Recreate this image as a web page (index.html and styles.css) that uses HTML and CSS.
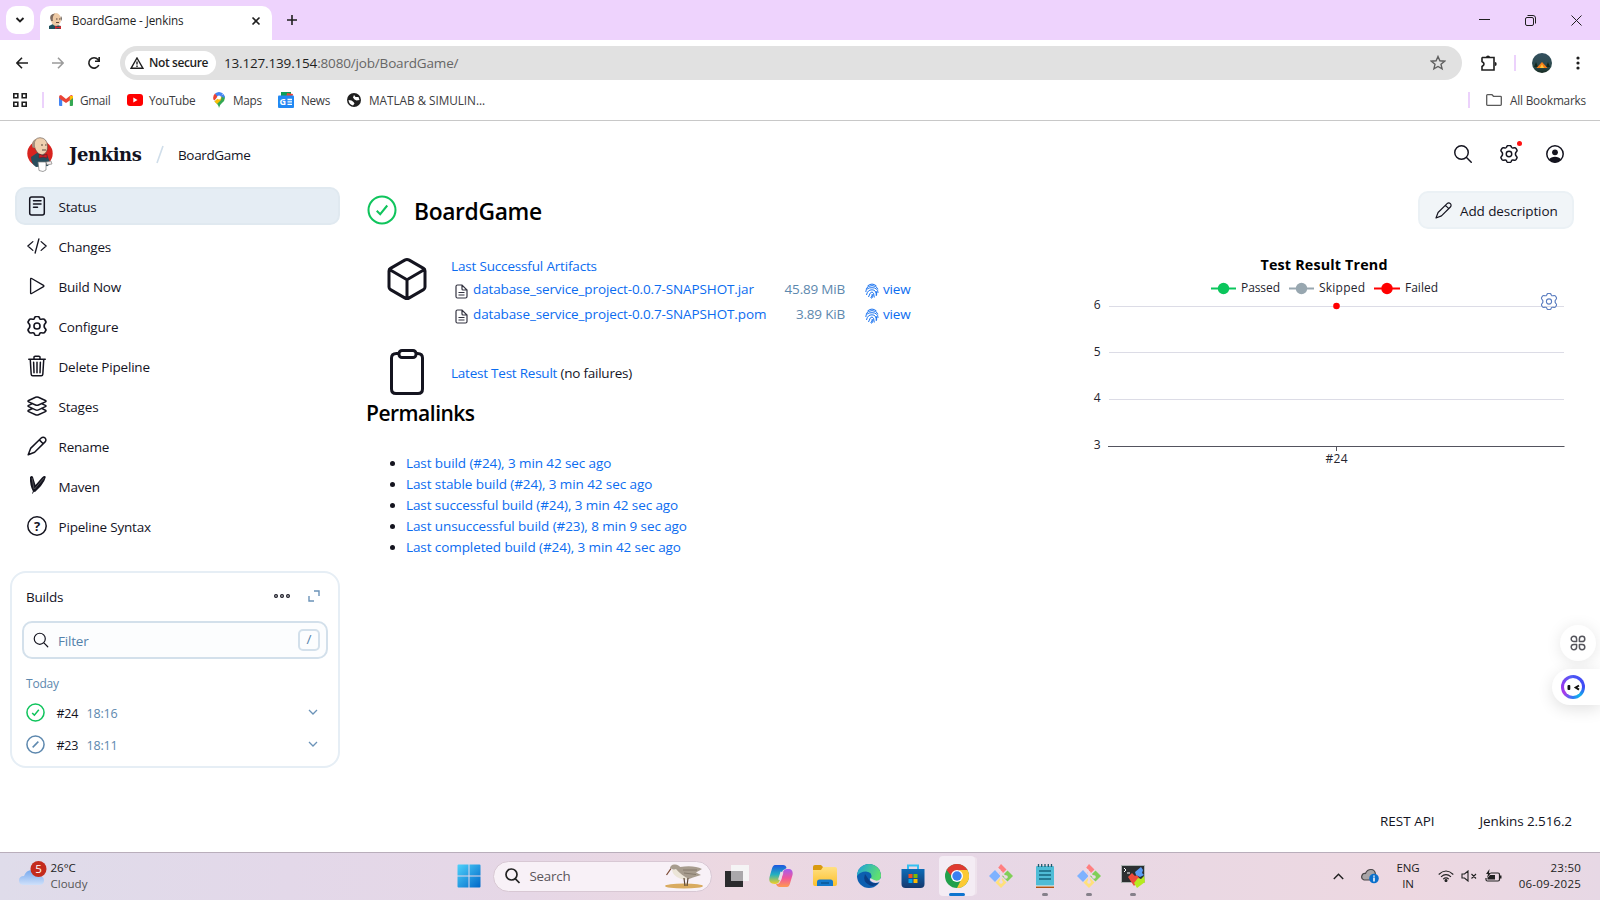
FILE: index.html
```html
<!DOCTYPE html>
<html lang="en">
<head>
<meta charset="utf-8">
<title>BoardGame - Jenkins</title>
<link rel="stylesheet" href="styles.css">
</head>
<body>
<svg class="defs" aria-hidden="true">
  <defs>
    <symbol id="search" viewBox="0 0 512 512"><path d="M221.09 64a157.09 157.09 0 10157.09 157.09A157.1 157.1 0 00221.09 64zM338.29 338.29L448 448"/></symbol>
    <symbol id="gear" viewBox="0.500 0.500 19 19"><path transform="translate(-1 0) scale(1.100 1)" d="M8 1.900Q8.400 1 9.300 1h1.400Q11.600 1 12 1.900L12.400 2.900Q12.800 3.700 13.700 3.600L15.200 3.400Q16.200 3.300 16.700 4.100L17.500 5.500Q18 6.400 17.400 7.200L16.700 8.100Q16.200 8.700 16.200 10T16.700 11.900L17.400 12.800Q18 13.600 17.500 14.500L16.700 15.900Q16.200 16.700 15.200 16.600L13.700 16.400Q12.800 16.300 12.400 17.100L12 18.100Q11.600 19 10.700 19H9.300Q8.400 19 8 18.100L7.600 17.100Q7.200 16.300 6.300 16.400L4.800 16.600Q3.800 16.700 3.300 15.900L2.500 14.500Q2 13.600 2.600 12.800L3.300 11.900Q3.800 11.300 3.800 10T3.300 8.100L2.600 7.200Q2 6.400 2.500 5.500L3.300 4.100Q3.800 3.300 4.800 3.400L6.300 3.600Q7.200 3.700 7.600 2.900Z"/><circle cx="10" cy="10" r="2.900"/></symbol>
    <symbol id="pencil" viewBox="0 0 20 20"><path d="M1.200 18.800L3.600 12.400 14.200 2a2.700 2.700 0 0 1 3.900 3.900L7.600 16.300ZM12.300 3.900l3.900 3.900"/></symbol>
    <symbol id="file" viewBox="0 0 13 15"><path d="M1 2.500Q1 1 2.500 1H7l5 5v6.500Q12 14 10.500 14h-8Q1 14 1 12.500ZM7 1v4Q7 6 8 6h4M3.500 8.500h6M3.500 11h6"/></symbol>
    <symbol id="finger" viewBox="0 0 14 16"><path d="M2.500 3Q7-.8 11.500 3M.8 6Q3 2.600 7 2.600T13.200 6M.8 9Q.8 4.700 7 4.700T13 10M1.500 12Q2.500 6.800 7 6.800T11.300 13M3.500 14Q5 8.900 7 8.900T9.300 14.500M5.700 15Q7.500 13 7.200 11M11 8Q12 10 11.600 12M8 11.500Q8 14 6.500 15.500"/></symbol>
    <symbol id="check" viewBox="0 0 20 20"><circle cx="10" cy="10" r="9"/><path d="M6.500 10.500l2.300 2.300L13.500 7"/></symbol>
    <symbol id="down" viewBox="0 0 10 6"><path d="M1 1l4 4 4-4"/></symbol>
    <symbol id="git" viewBox="0 0 24 24"><path fill="#ff7f80" d="M12 0l5.500 5.500-5.500 5.500-2-2 2-3-3-2z"/><path fill="#7eb2ff" d="M6 6l5.500 6L6 18 0 12z"/><path fill="#80cf58" d="M18.500 6.500L24 12l-5.500 5.500L13 12z"/><path fill="#ffe07a" d="M12 13l5.500 5.500L12 24l-5.500-5.500z"/><path fill="none" stroke="#ead9e5" stroke-width="1.800" d="M8 4l4 4v10M12 9l5 4"/><circle cx="12" cy="9" r="1.800" fill="#ead9e5"/><circle cx="12" cy="18" r="1.800" fill="#ead9e5"/><circle cx="17" cy="13" r="1.800" fill="#ead9e5"/></symbol>
    <linearGradient id="gwin" x2="1" y2="1"><stop stop-color="#4fd2fb"/><stop offset="1" stop-color="#0067c8"/></linearGradient>
    <linearGradient id="gedge" x2="1" y2=".4"><stop stop-color="#1b9fe0"/><stop offset="1" stop-color="#5fe070"/></linearGradient>
    <linearGradient id="gcopA" x2="0" y2="1"><stop stop-color="#1c57e0"/><stop offset=".5" stop-color="#23b0c0"/><stop offset="1" stop-color="#f5d020"/></linearGradient>
    <linearGradient id="gcopB" x2="0" y2="1"><stop stop-color="#a45cf0"/><stop offset=".5" stop-color="#f0569a"/><stop offset="1" stop-color="#ff9a50"/></linearGradient>
    <linearGradient id="gfold" x2="0" y2="1"><stop stop-color="#ffe083"/><stop offset="1" stop-color="#fcc02c"/></linearGradient>
    <linearGradient id="gstore" x2="0" y2="1"><stop stop-color="#0d6cb8"/><stop offset="1" stop-color="#15386e"/></linearGradient>
    <linearGradient id="gcloud" x2="0" y2="1"><stop stop-color="#76a9ee"/><stop offset="1" stop-color="#cfe0fa"/></linearGradient>
    <linearGradient id="gsky" x2="0" y2="1"><stop stop-color="#33505f"/><stop offset=".7" stop-color="#2c4a4c"/><stop offset="1" stop-color="#14281e"/></linearGradient>
  </defs>
</svg>

<header class="tabs">
  <div class="tab-search"><svg width="10" height="8" viewBox="0 0 10 8" class="ink s2"><path d="M1.500 2L5 5.500 8.500 2"/></svg></div>
  <div class="tab">
    <svg width="16" height="16" viewBox="0 0 16 16"><path d="M1 16v-3l4-2 8 2v3z" fill="#1d4f5c"/><ellipse cx="8" cy="6.500" rx="5" ry="6.500" fill="#edc9a4"/><path d="M3 8Q0 1 7 .5 4 3 5 8z" fill="#7d6a5e"/><path d="M13 3q1.500 2 .5 5l-1-2z" fill="#4b4039"/><path d="M8 6h1.500M11 6h1M8 9.500h3" stroke="#5b4438"/><path d="M7 13l3 1 3-1v3l-3-1-3 1z" fill="#d7282d"/></svg>
    <span class="tab-title">BoardGame - Jenkins</span>
    <svg width="10" height="10" viewBox="0 0 10 10" class="ink s16"><path d="M1.500 1.500l7 7M8.500 1.500l-7 7"/></svg>
  </div>
  <svg class="newtab ink s16" width="12" height="12" viewBox="0 0 12 12"><path d="M6 1v10M1 6h10"/></svg>
  <div class="window-buttons">
    <svg width="11" height="11" viewBox="0 0 11 11" class="ink s1"><path d="M0 4.500h11"/></svg>
    <svg width="11" height="11" viewBox="0 0 11 11" class="ink s1"><rect x=".5" y="2.500" width="8" height="8" rx="1.500"/><path d="M2.500 .5H8Q10.500 .5 10.500 3v5.500"/></svg>
    <svg width="11" height="11" viewBox="0 0 11 11" class="ink s1"><path d="M.5 .5l10 10M10.500 .5l-10 10"/></svg>
  </div>
</header>

<div class="toolbar">
  <svg width="12" height="12" viewBox="0 0 12 12" class="ink s16"><path d="M12 6H1M6 .8L.9 6 6 11.200"/></svg>
  <svg width="12" height="12" viewBox="0 0 12 12" class="ink s16 faded"><path d="M0 6h11M6 .8L11.100 6 6 11.200"/></svg>
  <svg width="14" height="14" viewBox="0 0 14 14" class="ink s16"><path d="M11.800 9A5.200 5.200 0 1 1 11 3.500L12 4.700M12.200 1v4.200H8"/></svg>
  <div class="omnibox">
    <div class="chip"><svg width="14" height="12" viewBox="0 0 14 12" class="ink s14"><path d="M7 1L13 11.300H1zM7 4.500v3M7 8.600v1.300"/></svg><span>Not secure</span></div>
    <span class="url">13.127.139.154<span class="path">:8080/job/BoardGame/</span></span>
    <svg class="star" width="16" height="16" viewBox="0 0 16 16"><path d="M8 1.500l1.900 4.300 4.700.4-3.600 3.100 1.100 4.600L8 11.500l-4.100 2.400L5 9.300 1.400 6.200l4.700-.4z"/></svg>
  </div>
  <svg width="17" height="17" viewBox="0 0 17 17" class="ink s16"><path d="M2.500 2.500h11.500v12.500H2v-3.500Q6 9 2 6.500V3z"/><path d="M6 2.200a2 1.800 0 0 1 4 0zM15 7a1.700 2 0 0 1 0 4z" fill="#1f1f1f" stroke="none"/></svg>
  <i class="vbar"></i>
  <svg class="avatar" width="20" height="20" viewBox="0 0 20 20"><circle cx="10" cy="10" r="10" fill="url(#gsky)"/><path d="M2 14l2-5 2 5M14 14l2-5 2 5" fill="#14281e"/><path d="M4.500 15L10 9l5.500 6z" fill="#f57c1a"/><path d="M8 15l2-4 2 4z" fill="#ffc637"/></svg>
  <svg width="4" height="14" viewBox="0 0 4 14" fill="#1f1f1f"><circle cx="2" cy="2" r="1.600"/><circle cx="2" cy="7" r="1.600"/><circle cx="2" cy="12" r="1.600"/></svg>
</div>

<nav class="bookmarks">
  <svg width="14" height="14" viewBox="0 0 14 14" class="ink s16"><path d="M.8.8h4v4h-4zM9.200.8h4v4h-4zM.8 9.200h4v4h-4zM9.200 9.200h4v4h-4z"/></svg>
  <i class="vbar"></i>
  <svg class="b-gmail" width="14" height="11" viewBox="0 0 14 11"><path fill="#4285f4" d="M0 2l3.200 2v7H1Q0 11 0 10z"/><path fill="#34a853" d="M14 2l-3.200 2v7H13q1 0 1-1z"/><path fill="#ea4335" d="M0 2Q0 0 2 0L7 4 12 0Q14 0 14 2L13 4 7 8 1 4z"/><path fill="#fbbc04" d="M10.800 1L14 1v2L10.800 5.500z"/></svg>
  <span class="b-t1">Gmail</span>
  <svg class="b-yt" width="16" height="12" viewBox="0 0 16 12"><rect width="16" height="12" rx="3" fill="#f00"/><path d="M6.300 3.500v5L10.500 6z" fill="#fff"/></svg>
  <span class="b-t2">YouTube</span>
  <svg class="b-map" width="12" height="16" viewBox="0 0 12 16"><path fill="#34a853" d="M6 16Q5.600 12.500 1.500 9.500L10 3l1.500 1Q13 8 9 11 6.400 13 6 16z"/><path fill="#fbbc04" d="M1.500 9.500L9 2.500 8 8l-4 4z"/><path fill="#ea4335" d="M.4 7.500Q-.5 4 2 1.500L5 4 1.500 8.500z"/><path fill="#4285f4" d="M2 1.500Q6-1.500 10 1.500L6 6 4 4z"/><path fill="#4285f4" d="M7 4l3.500-2q1.500 2 1 4z"/><circle cx="6" cy="5.500" r="2" fill="#fff"/></svg>
  <span class="b-t3">Maps</span>
  <svg class="b-news" width="16" height="16" viewBox="0 0 16 16"><path fill="#0c9d58" d="M3 0h10v5H3z"/><path fill="#ea4335" d="M9 1l6 1-1 4H8z"/><rect y="3.500" width="16" height="12.500" rx="1" fill="#2188f3"/><path d="M9.500 7.500H14M9.500 9.900H14M9.500 12.300H14" stroke="#fff" stroke-width="1.300"/><text x="1.500" y="12.800" font-size="9" font-weight="700" fill="#fff">G</text></svg>
  <span class="b-t4">News</span>
  <svg class="b-globe" width="14" height="14" viewBox="0 0 14 14"><circle cx="7" cy="7" r="7" fill="#1f1f1f"/><path d="M1.500 7Q5 7 6.500 9L7.500 10.500 6 12.500Q2 11.500 1.500 7zM7 2l1.500 2 3 0 1 3-3 .5-2-1-1.500-2z" fill="#fff"/></svg>
  <span class="b-t5">MATLAB &amp; SIMULIN...</span>
  <span class="all-bookmarks"><i class="vbar"></i><svg width="16" height="12" viewBox="0 0 16 12" fill="none" stroke="#5a5a5a" stroke-width="1.300"><path d="M.7 1.500Q.7.700 1.500.7H6l1.500 1.600h7q.8 0 .8.800v7.400q0 .8-.8.800h-13q-.8 0-.8-.8z"/></svg><span>All Bookmarks</span></span>
</nav>

<div class="page">
  <header class="top">
    <svg class="logo" width="26" height="35" viewBox="0 0 26 35"><circle cx="13" cy="16.500" r="12.700" fill="#d8241f"/><path d="M4 20l6-4 10 2 3 7-2 4-12 1Q4 27 4 20z" fill="#294d5c"/><path d="M11 25h8v8l-3 1.500-4-1z" fill="#fff" stroke="#777" stroke-width=".7"/><path d="M19 25l5-1 1 3-5 1z" fill="#efe8e8" stroke="#777" stroke-width=".6"/><path d="M7 8Q7 1 13 .7 20 1 20.500 9q.5 7-5.500 9-6-1-8-10z" fill="#efd0af" stroke="#5b4a40" stroke-width=".6"/><path d="M5.500 10.500Q3.500 4 9.500 1.500 7 5 8 11z" fill="#a5907f"/><path d="M14 8h2M18 8h1.500M15 13h4" stroke="#45352c" stroke-width=".9"/><path d="M12 17l4 1.500 4-1.500v4l-4-1-4 1z" fill="#c92027" stroke="#68151a" stroke-width=".5"/></svg>
    <span class="brand">Jenkins</span>
    <svg class="slash" width="8" height="19" viewBox="0 0 8 19"><path d="M7 1L1 18"/></svg>
    <span class="crumb">BoardGame</span>
    <div class="top-icons">
      <svg width="22" height="22" class="ic w34"><use href="#search"/></svg>
      <span class="gear-wrap"><svg width="18" height="18" class="ic w15"><use href="#gear"/></svg><i class="alert"></i></span>
      <svg width="18" height="18" viewBox="0 0 18 18"><circle cx="9" cy="9" r="8.200" fill="none" stroke="#14141f" stroke-width="1.500"/><circle cx="9" cy="7.300" r="2.900" fill="#14141f"/><path d="M3 14.500Q5 11.700 9 11.700T15 14.500Q12.500 17.500 9 17.500T3 14.500z" fill="#14141f"/></svg>
    </div>
  </header>

  <div class="columns">
    <aside>
      <nav class="tasks">
        <a class="task active"><svg width="20" height="20" viewBox="0 0 20 20" class="ic w15"><rect x="2.700" y="1" width="14.600" height="18" rx="2"/><path d="M6.500 4.700h7.500M6.500 8h7.500M6.500 11.300h4"/></svg><span>Status</span></a>
        <a class="task"><svg width="20" height="20" viewBox="0 0 512 512" class="ic w34"><path d="M150 368L22 256l128-112M362 368l128-112-128-112M304 76l-96 360"/></svg><span>Changes</span></a>
        <a class="task"><svg width="20" height="20" viewBox="0 0 512 512" class="ic w34"><path d="M92 80v352c0 17 13 25 27 17l304-176c12-7 12-27 0-34L119 63c-14-8-27 0-27 17z"/></svg><span>Build Now</span></a>
        <a class="task"><svg width="20" height="20" class="ic w15"><use href="#gear"/></svg><span>Configure</span></a>
        <a class="task"><svg width="24" height="24" viewBox="0 0 512 512" class="ic w32 big"><path d="M112 112l20 320c.95 18.490 14.400 32 32 32h184c17.670 0 30.870-13.510 32-32l20-320M80 112h352M192 112V72a23.930 23.930 0 0124-24h80a23.930 23.930 0 0124 24v40M256 176v224M184 176l8 224M328 176l-8 224"/></svg><span>Delete Pipeline</span></a>
        <a class="task"><svg width="24" height="24" viewBox="0 0 512 512" class="ic w32 big"><path d="M434.800 137.650l-149.360-68.100c-16.190-7.400-42.690-7.400-58.880 0L77.300 137.650c-17.600 8-17.600 21.090 0 29.090l148 67.500c16.890 7.700 44.690 7.700 61.580 0l148-67.500c17.520-8 17.520-21.100-.08-29.090zM160 308.520l-82.700 37.110c-17.600 8-17.600 21.100 0 29.100l148 67.500c16.890 7.690 44.690 7.690 61.580 0l148-67.500c17.600-8 17.600-21.100 0-29.100l-79.940-38.470M160 204.480l-82.800 37.160c-17.600 8-17.600 21.100 0 29.100l148 67.490c16.890 7.700 44.690 7.700 61.580 0l148-67.490c17.700-8 17.700-21.100.1-29.100L352 204.480"/></svg><span>Stages</span></a>
        <a class="task"><svg width="20" height="20" class="ic w15"><use href="#pencil"/></svg><span>Rename</span></a>
        <a class="task maven"><svg width="20" height="20" viewBox="0 0 20 20" fill="#14141f"><path d="M3 2Q5 0 6 2L8.500 10 15 2.500Q18 0 18.800 2 18 6 14 11L8 17 6 16.500Q2.500 10 3 2z"/><path d="M7.500 14L17 3M5 3l2 11" stroke="#777" stroke-width=".6"/><path d="M7 15l-1.500 3.500" stroke="#14141f"/></svg><span>Maven</span></a>
        <a class="task"><svg width="20" height="20" viewBox="0 0 20 20"><circle cx="10" cy="10" r="9.200" class="ic w15"/><text x="10" y="14.600" text-anchor="middle" font-size="13" font-weight="700" fill="#14141f">?</text></svg><span>Pipeline Syntax</span></a>
      </nav>

      <section class="builds">
        <div class="builds-head"><span>Builds</span>
          <svg class="dots" width="16" height="4" viewBox="0 0 16 4" fill="none" stroke="#14141f" stroke-width="1.200"><circle cx="2" cy="2" r="1.400"/><circle cx="8" cy="2" r="1.400"/><circle cx="14" cy="2" r="1.400"/></svg>
          <svg class="expand" width="12" height="12" viewBox="0 0 12 12" fill="none" stroke="#6b93b8" stroke-width="1.400"><path d="M6 1h5v5M1 6v5h5"/></svg>
        </div>
        <div class="filter"><svg width="18" height="18" class="ic w34"><use href="#search"/></svg><span>Filter</span><kbd>/</kbd></div>
        <div class="today">Today</div>
        <div class="build"><svg width="19" height="19" class="green"><use href="#check"/></svg><span class="num">#24</span><span class="time">18:16</span><svg class="chev" width="10" height="6"><use href="#down"/></svg></div>
        <div class="build"><svg width="19" height="19" viewBox="0 0 20 20" class="aborted"><circle cx="10" cy="10" r="9"/><path d="M7 13l6-6"/></svg><span class="num">#23</span><span class="time">18:11</span><svg class="chev" width="10" height="6"><use href="#down"/></svg></div>
      </section>
    </aside>

    <main>
      <div class="title-row">
        <svg width="30" height="30" class="green thin"><use href="#check"/></svg>
        <h1>BoardGame</h1>
        <button class="add"><svg width="17" height="17" class="ic w14"><use href="#pencil"/></svg><span>Add description</span></button>
      </div>
      <div class="body-row">
        <div class="info">
          <div class="artifacts">
            <svg class="cube" width="48" height="48" viewBox="0 0 512 512"><path d="M448 341.370V170.610A32 32 0 00432.110 143l-152-88.460a47.940 47.940 0 00-48.240 0L79.890 143A32 32 0 0064 170.610v170.760A32 32 0 0079.890 369l152 88.460a48 48 0 0048.240 0l152-88.460A32 32 0 00448 341.370zM69 153.990l187 110 187-110M256 463.990v-200"/></svg>
            <div class="art-list">
              <a class="art-title">Last Successful Artifacts</a>
              <div class="art"><svg width="13" height="15" class="fileic"><use href="#file"/></svg><a class="fn">database_service_project-0.0.7-SNAPSHOT.jar</a><span class="size">45.89 MiB</span><svg width="14" height="16" class="finger"><use href="#finger"/></svg><a>view</a></div>
              <div class="art"><svg width="13" height="15" class="fileic"><use href="#file"/></svg><a class="fn">database_service_project-0.0.7-SNAPSHOT.pom</a><span class="size">3.89 KiB</span><svg width="14" height="16" class="finger"><use href="#finger"/></svg><a>view</a></div>
            </div>
          </div>
          <div class="tests">
            <svg width="34" height="46" viewBox="0 0 34 46" fill="none" stroke="#14141f" stroke-width="3"><path d="M10 4.500H6.500Q1.500 4.500 1.500 9v31q0 4.500 4.500 4.500h22q4.500 0 4.500-4.500V9q0-4.500-5-4.500H25"/><rect x="9" y="1.500" width="17" height="7" rx="3"/></svg>
            <span><a class="lt">Latest Test Result</a> (no failures)</span>
          </div>
          <h2>Permalinks</h2>
          <ul>
            <li><a>Last build (#24), 3 min 42 sec ago</a></li>
            <li><a>Last stable build (#24), 3 min 42 sec ago</a></li>
            <li><a>Last successful build (#24), 3 min 42 sec ago</a></li>
            <li><a>Last unsuccessful build (#23), 8 min 9 sec ago</a></li>
            <li><a>Last completed build (#24), 3 min 42 sec ago</a></li>
          </ul>
        </div>
        <svg class="chart" width="500" height="230" viewBox="1080 250 500 230">
          <text class="ct" x="1324" y="270" textLength="127">Test Result Trend</text>
          <g stroke-width="2"><path stroke="#0bc65c" d="M1211 288.500h25"/><path stroke="#98a7b0" d="M1289 288.500h25"/><path stroke="#f00" d="M1374 288.500h26"/></g>
          <circle cx="1223.500" cy="288.500" r="5.700" fill="#0bc65c"/><circle cx="1301.500" cy="288.500" r="5.700" fill="#98a7b0"/><circle cx="1387" cy="288.500" r="5.700" fill="#f00"/>
          <g class="cl"><text x="1241" y="292" textLength="39">Passed</text><text x="1319" y="292" textLength="46">Skipped</text><text x="1405" y="292" textLength="33">Failed</text></g>
          <path d="M1109 306.500h455M1109 352.500h455M1109 399.500h455" stroke="#dcdce6"/>
          <path d="M1108 446.500h456.500M1336.500 446v5" stroke="#54545e"/>
          <g class="cl end"><text x="1100.500" y="309">6</text><text x="1100.500" y="356">5</text><text x="1100.500" y="402">4</text><text x="1100.500" y="449">3</text></g>
          <text class="cl mid" x="1336.500" y="463" textLength="22">#24</text>
          <circle cx="1336.500" cy="306" r="3.300" fill="#f00"/>
          <svg x="1540.500" y="293" width="17" height="17" fill="none" stroke="#5b7dc0" stroke-width="1.200"><use href="#gear"/></svg>
        </svg>
      </div>
    </main>
  </div>
  <footer><span class="rest">REST API</span><span class="ver">Jenkins 2.516.2</span></footer>
  <div class="floaters">
    <div class="float-round"><svg width="16" height="16" viewBox="0 0 16 16" fill="none" stroke="#55555c" stroke-width="1.500" stroke-linejoin="round"><path d="M6.600 6.600H3.900A2.700 2.700 0 0 1 1.200 3.900 2.700 2.700 0 0 1 6.600 3.900zM9.400 6.600V3.900A2.700 2.700 0 0 1 14.800 3.900 2.700 2.700 0 0 1 12.100 6.600zM6.600 9.400V12.100A2.700 2.700 0 0 1 1.200 12.100 2.700 2.700 0 0 1 3.900 9.400zM9.400 9.400H12.100A2.700 2.700 0 0 1 14.800 12.100 2.700 2.700 0 0 1 9.400 12.100z"/></svg></div>
    <div class="float-pill"><div class="ring"><svg width="18" height="18" viewBox="0 0 18 18"><rect x="3.500" y="7" width="2.800" height="5" rx="1" fill="#111"/><path d="M15 7.500l-3.300 2L15 11.700" fill="none" stroke="#111" stroke-width="2"/></svg></div></div>
  </div>
</div>

<div class="taskbar">
  <div class="weather">
    <svg width="28" height="26" viewBox="0 0 28 26"><path d="M5 24Q0 24 0 19.500T5 15Q7 9 13 9t8 6q4 .5 4 4.500T21 24z" fill="url(#gcloud)"/><circle cx="19.500" cy="8" r="8" fill="#c42b1c"/><text x="19.500" y="12" text-anchor="middle" font-size="11.500" fill="#fff">5</text></svg>
    <div class="lines"><span class="deg">26°C</span><span class="soft">Cloudy</span></div>
  </div>
  <svg class="win" width="24" height="24" viewBox="0 0 24 24" fill="url(#gwin)"><path d="M1.500.5H11.500v11H.5v-10q0-1 1-1zM12.500.5h10q1 0 1 1v10h-11zM.5 12.500h11v11H1.500q-1 0-1-1zM12.500 12.500h11v10q0 1-1 1h-10z"/></svg>
  <div class="tsearch">
    <svg width="16" height="16" viewBox="0 0 16 16" fill="none" stroke="#222" stroke-width="1.700"><circle cx="6.500" cy="6.500" r="5.500"/><path d="M10.200 10.700L14.500 15"/></svg><span>Search</span>
    <svg class="bird" width="40" height="26" viewBox="0 0 40 26"><ellipse cx="20" cy="23" rx="19" ry="2.500" fill="#d9ab60"/><path d="M7 5.500L2.500 12" stroke="#7b4a34" stroke-width="1.300"/><path d="M6 5Q7 1 11 1.500T16 4Q30 2 38 6L32 9.500 37 12 29 14.500Q22 18 15 14 11 10 10 7z" fill="#a79c8e"/><path d="M8 7Q9 13 16 15.500t9 .5Q17 12 12 6z" fill="#ece5d8"/><path d="M19 7l14 0M20 10l12 1.500" stroke="#7d7265" stroke-width=".8"/><path d="M20 15l1 8M24 15l-1 8" stroke="#5a4636" stroke-width="1.200"/></svg>
  </div>
  <div class="apps">
    <div class="app"><svg width="24" height="24" viewBox="0 0 24 24"><rect y="7" width="18" height="16" fill="#2b2b2d"/><rect x="6" y="1" width="18" height="16" fill="#f5f5f5" opacity=".94"/><path d="M6 7h12v10H6z" fill="#aaa8ab"/></svg></div>
    <div class="app"><svg width="24" height="24" viewBox="0 0 24 24"><path d="M6 1h8q3 0 3.500 3l-2 1.500Q14 5 13 8l-2.500 9Q9.500 20 6 20l-3-.5Q-1 18 .8 12L3 4.500Q4 1 6 1z" fill="url(#gcopA)"/><path d="M18 23h-8q-2 0-3-3l2 0Q11 19 12 16l2-8q1-3 4-3h2.500q4 1 3 6L21 19.500Q20 23 18 23z" fill="url(#gcopB)"/><path d="M10.500 16L13 8" stroke="#ead9e5" stroke-width="3"/></svg></div>
    <div class="app"><svg width="24" height="24" viewBox="0 0 24 24"><path d="M0 3q0-2 2-2h6l3 3v4H0z" fill="#d99a10"/><path d="M0 6h8l2-3h12q2 0 2 2v15q0 2-2 2H2q-2 0-2-2z" fill="url(#gfold)"/><path d="M4 22v-4q0-2.500 2.500-2.500h11Q20 15.500 20 18v4z" fill="#1479cc"/><path d="M8 19h8" stroke="#0b5796" stroke-width="1.500"/></svg></div>
    <div class="app"><svg width="24" height="24" viewBox="0 0 24 24"><circle cx="12" cy="12" r="12" fill="#0d5fb0"/><path d="M0 12A12 12 0 0 1 24 12q0 5-6 5.500-5 0-4-3Q16 8 9 7.500 3 7.500 0 12z" fill="url(#gedge)"/><path d="M8 10Q5 18 13 21.500q5 1.500 9-3Q15 21 12 16z" fill="#0b3f86"/><path d="M14 14.500q-2-1-.5 2.500 5 4 10.500 0l0-3q-3 5-10 .5z" fill="#ead9e5"/></svg></div>
    <div class="app"><svg width="24" height="24" viewBox="0 0 24 24"><path d="M7 6V1.500h10V6" fill="none" stroke="#35c0f2" stroke-width="2"/><path d="M.5 5h23v15q0 4-4 4h-15q-4 0-4-4z" fill="url(#gstore)"/><path d="M7.500 10h4v4h-4z" fill="#f25022"/><path d="M12.500 10h4v4h-4z" fill="#7fba00"/><path d="M7.500 15h4v4h-4z" fill="#00a4ef"/><path d="M12.500 15h4v4h-4z" fill="#ffb900"/></svg></div>
    <div class="app active"><svg width="24" height="24" viewBox="0 0 24 24"><circle cx="12" cy="12" r="12" fill="#22a04b"/><path d="M1.600 6A12 12 0 0 1 22.400 6L12 7 8 14z" fill="#df3a31"/><path d="M22.400 6A12 12 0 0 1 12 24L17 14 14 6z" fill="#fcc934"/><circle cx="12" cy="12" r="6" fill="#fff"/><circle cx="12" cy="12" r="4.700" fill="#3b7ff0"/></svg><i class="bar"></i></div>
    <div class="app"><svg width="24" height="24"><use href="#git"/></svg></div>
    <div class="app"><svg width="24" height="24" viewBox="0 0 24 24"><rect x="3" y="2" width="18" height="20" rx="1" fill="#4fbcd6"/><path d="M3 21.500h18v1.500H3z" fill="#f4efe9"/><path d="M3 22.500h18V24H3z" fill="#b25414"/><path d="M5.500 0v3M8.700 0v3M12 0v3M15.300 0v3M18.500 0v3" stroke="#22596b" stroke-width="1.300"/><path d="M6 7h12M6 11h12M6 15h12" stroke="#17647d" stroke-width="1.500"/></svg><i class="pip"></i></div>
    <div class="app"><svg width="24" height="24"><use href="#git"/></svg><i class="pip"></i></div>
    <div class="app"><svg width="24" height="24" viewBox="0 0 24 24"><rect x=".5" y="1.500" width="23" height="17" fill="#2c2f31" stroke="#b0b4b4"/><path d="M3 4l2 2-2 2M6 9h3" stroke="#fff" fill="none"/><path d="M7 13l4-4 3 3 2-1 3 4-6 7z" fill="#ee4a3c"/><path d="M14 8l6-5 2 3-1 3 2 2-4 2-4-2z" fill="#5a9cf5"/><path d="M13 19l4-5 3 1 3-3 1 6-8 6z" fill="#b5ea20"/></svg><i class="pip"></i></div>
  </div>
  <div class="tray">
    <svg width="11" height="7" viewBox="0 0 11 7" class="ink s14"><path d="M.8 6l4.700-4.700L10.200 6"/></svg>
    <svg class="onedrive" width="18" height="16" viewBox="0 0 18 16"><path d="M3 12Q0 11 .8 8T4.500 5.500Q6 1.500 10 1.500t4.500 5l-3 5.500z" fill="#a9a5a7" stroke="#4a4648" stroke-width="1.200"/><circle cx="13" cy="10.500" r="4.800" fill="#0a6fcb"/><path d="M13 7.500v1.200M13 9.500v4" stroke="#fff" stroke-width="1.500"/></svg>
    <div class="lines lang"><span>ENG</span><span>IN</span></div>
    <svg class="wifi" width="16" height="12" viewBox="0 0 16 12" fill="none" stroke="#222" stroke-width="1.100"><path d="M.7 4.500Q8-2.500 15.300 4.500M3 6.900Q8 2.300 13 6.900M5.200 9.100Q8 6.600 10.800 9.100"/><circle cx="8" cy="10.500" r="1" fill="#222"/></svg>
    <svg class="vol" width="16" height="12" viewBox="0 0 16 12"><path d="M1 4h2.500L7 1v10L3.500 8H1zM10.500 4l4.500 4.500M15 4l-4.500 4.500" fill="none" stroke="#222" stroke-width="1.100"/></svg>
    <svg class="bat" width="17" height="14" viewBox="0 0 17 14"><path d="M5.500 4H13q1.500 0 1.500 1.500v5q0 1.500-1.500 1.500H2.500Q1 12 1 10.500V9" fill="none" stroke="#222" stroke-width="1.200"/><path d="M15 6.500h1.500v3H15zM5 6h5v4.500H2.500V9z" fill="#222"/><path d="M4.500 0L1 5h2L2 9l4-5H4z" fill="#222"/></svg>
    <div class="lines clock"><span>23:50</span><span>06-09-2025</span></div>
  </div>
</div>
</body>
</html>
```

FILE: styles.css
```css
* { box-sizing: border-box; }
body {
  margin: 0;
  width: 1600px;
  height: 900px;
  overflow: hidden;
  background: #fff;
  color: #14141f;
  font: 13.5px/20px "Open Sans", "Noto Sans", sans-serif;
  letter-spacing: -0.2px;
  white-space: nowrap;
}
svg { display: block; flex: none; }
.defs { position: absolute; width: 0; height: 0; }
i { display: block; flex: none; }

.ink { fill: none; stroke: #1f1f1f; }
.s1 { stroke-width: 1; }
.s14 { stroke-width: 1.4; }
.s16 { stroke-width: 1.6; }
.s2 { stroke-width: 1.9; }
.faded { stroke: #9b9b9b; }
.ic { fill: none; stroke: #14141f; stroke-linecap: round; stroke-linejoin: round; }
.w14 { stroke-width: 1.4; }
.w15 { stroke-width: 1.5; }
.w32 { stroke-width: 32; }
.w34 { stroke-width: 34; }
.vbar { width: 2px; height: 16px; background: #ecd2fc; }

/* Tab strip */
.tabs { display: flex; height: 40px; padding: 6px 18px 0 6px; background: #eed3fd; }
.tab-search { display: flex; align-items: center; justify-content: center; width: 28px; height: 28px; border-radius: 10px; background: #fff; }
.tab {
  display: flex;
  align-items: center;
  width: 232px;
  margin-left: 6px;
  padding: 0 11px 5px 8px;
  border-radius: 10px 10px 0 0;
  background: #fff;
}
.tab-title { flex: 1; margin: 0 0 1px 8px; color: #1f1f1f; font-size: 11.7px; letter-spacing: -.13px; }
.newtab { margin: 8px 0 0 14px; }
.window-buttons { display: flex; gap: 35px; margin: 9px 0 0 auto; }

/* Address bar */
.toolbar { display: flex; align-items: center; height: 46px; padding: 0 20px 0 16px; }
.toolbar > svg:nth-child(2) { margin-left: 24px; }
.toolbar > svg:nth-child(3) { margin-left: 23px; }
.omnibox {
  display: flex;
  align-items: center;
  width: 1342px;
  height: 34px;
  margin: 0 18px 0 19px;
  padding: 0 16px 0 5px;
  border-radius: 17px;
  background: #e1e1e1;
}
.chip { display: flex; align-items: center; gap: 5px; width: 91px; height: 24px; padding-left: 5px; border-radius: 12px; background: #fff; color: #1f1f1f; font-size: 12px; font-weight: 600; letter-spacing: -.4px; }
.url { margin-left: 8px; color: #1f1f1f; font-size: 13.5px; letter-spacing: -.17px; }
.path { color: #666; }
.star { margin-left: auto; fill: none; stroke: #5f5f5f; stroke-width: 1.4; }
.toolbar .vbar { margin: 0 16px 0 17px; }
.avatar { margin-right: 24px; }

/* Bookmarks */
.bookmarks { display: flex; align-items: center; height: 35px; padding: 0 14px 6px 13px; border-bottom: 1px solid #c8c8c8; color: #3c3c40; font-size: 11.8px; letter-spacing: -.33px; }
.bookmarks > .vbar { margin: 0 15px; }
.bookmarks > span { margin-left: 7px; margin-bottom: 1px; }
.b-t1 { width: 47px; }
.bookmarks > .b-t2 { width: 57px; margin-left: 6px; }
.b-t3 { width: 36px; }
.bookmarks > .b-t3 { margin-left: 8px; }
.b-t4 { width: 39px; }
.b-map { margin-left: 7px; }
.b-globe { margin-left: 7px; }
.b-news { margin-left: 9px; }
.bookmarks > .b-t5 { margin-left: 8px; letter-spacing: -.06px; }
.bookmarks > .all-bookmarks { display: flex; align-items: center; gap: 8px; margin-left: auto; letter-spacing: -.2px; }
.all-bookmarks svg { margin-left: 8px; }

/* Page */
.page { position: relative; display: flex; flex-direction: column; height: 731px; }
.top { display: flex; align-items: center; height: 66px; padding-left: 27px; }
.brand { width: 74px; margin: 2px 0 0 16px; font: bold 18px/24px "DejaVu Serif", serif; letter-spacing: -.45px; }
.slash { margin-left: 13px; fill: none; stroke: #d0deea; stroke-width: 1.6; }
.crumb { margin: 2px 0 0 14px; letter-spacing: -.35px; }
.top-icons { display: flex; align-items: center; margin: 0 36px 0 auto; }
.gear-wrap { position: relative; margin: 0 28px 0 26px; }
.alert { position: absolute; top: -4px; right: -4px; width: 5px; height: 5px; border-radius: 50%; background: #f11; }
.columns { display: flex; flex: 1; }
aside { width: 340px; padding: 0 0 0 10px; }
.tasks { display: flex; flex-direction: column; gap: 2px; margin-left: 5px; }
.task { display: flex; align-items: center; height: 38px; padding-left: 12px; border-radius: 10px; }
.task svg { overflow: visible; }
.task .big { margin: 0 -2px; }
.task span { margin: 2px 0 0 11.5px; }
.task.active { border: 2px solid #e0e9f0; padding-left: 10px; background: #e5edf4; }
.maven svg { margin-bottom: 3px; }
.builds { height: 197px; margin-top: 26px; padding: 14px 10px 0; border: 2px solid #e6eef5; border-radius: 16px; }
.builds-head { display: flex; align-items: center; padding: 0 8px 0 4px; }
.dots { margin: 0 18px 2px auto; }
.expand { margin-bottom: 2px; }
.filter { display: flex; align-items: center; height: 38px; margin-top: 14px; padding: 0 6px 0 8px; border: 2px solid #d3e0eb; border-radius: 10px; background: #fcfdfe; color: #5482ab; }
.filter span { margin-left: 8px; padding-top: 1px; }
kbd { width: 22px; height: 22px; margin-left: auto; border: 2px solid #d3e0eb; border-radius: 5px; font: inherit; line-height: 17px; text-align: center; }
.today { margin: 15px 0 8px 4px; color: #5d88ae; font-size: 12px; }
.build { display: flex; align-items: center; height: 20px; margin-bottom: 12px; padding: 0 10px 0 4px; font-size: 12.5px; }
.num { width: 30px; margin-left: 11.5px; padding-top: 3px; }
.time { padding-top: 3px; color: #5d88ae; }
.chev { margin-left: auto; fill: none; stroke: #6b93b8; stroke-width: 1.3; }
.green, .aborted { fill: none; stroke: #0fc45c; stroke-width: 1.6; }
.green.thin { stroke-width: 1.35; }
.aborted { stroke: #5d88ae; stroke-width: 1.6; }

main { flex: 1; padding: 0 26px; }
.title-row { display: flex; align-items: center; height: 46px; padding-left: 1px; }
h1 { margin: 3px 0 0 17px; font-size: 22.8px; line-height: 30px; font-weight: 600; letter-spacing: -.35px; color: #000; }
.add { display: flex; align-items: center; gap: 8px; width: 156px; height: 38px; margin-left: auto; padding: 1px 0 0 15px; border: 2px solid #ebf1f5; border-radius: 10px; background: #f1f5f8; color: inherit; font: inherit; letter-spacing: -.1px; }
.body-row { display: flex; justify-content: space-between; }
.info { padding-left: 1px; }
.artifacts { display: flex; padding: 21px 0 0 16px; height: 102px; }
.cube { margin-top: 1px; fill: none; stroke: #14141f; stroke-width: 32; stroke-linejoin: round; stroke-linecap: round; }
a { color: #0b6cf0; }
.task { color: #14141f; }
.art-list { padding-left: 20px; }
.art-title { display: block; height: 22px; padding-top: 2px; letter-spacing: -.17px; }
.art { display: flex; align-items: center; height: 25px; }
.fileic { margin: 6px 0 0 4px; fill: none; stroke: #333340; stroke-width: 1.2; }
.fn { width: 294px; margin-left: 5px; letter-spacing: -.12px; }
.size { width: 78px; text-align: right; color: #5d88ae; }
.finger { margin: 5px 4px 0 20px; fill: none; stroke: #1b74f0; stroke-width: 1; }
.tests { display: flex; align-items: center; gap: 27px; height: 46px; margin: 14px 0 0 23px; }
.tests span { margin-top: 2px; letter-spacing: -.23px; }
h2 { margin: 4px 0 0 -1px; font-size: 21px; line-height: 28px; font-weight: 600; letter-spacing: -.5px; color: #000; }
ul { margin: 26px 0 0; padding-left: 39px; line-height: 21px; letter-spacing: -.09px; }
li { height: 21px; }
.chart { margin: 17px -6px 0 0; }
.chart text { letter-spacing: 0; }
.ct { font-size: 14.3px; font-weight: 700; fill: #000; text-anchor: middle; }
.cl { font-size: 12px; fill: #24242e; }
.end { text-anchor: end; }
.mid { text-anchor: middle; }
footer { display: flex; justify-content: flex-end; height: 41px; padding-right: 28px; letter-spacing: -.1px; }
.rest { margin-right: 45px; letter-spacing: 0; }
.floaters { position: absolute; top: 504px; right: 0; }
.float-round { display: flex; align-items: center; justify-content: center; width: 36px; height: 36px; margin-left: 8px; border-radius: 50%; background: #fff; box-shadow: 0 2px 16px rgba(0,0,0,.1); }
.float-pill { display: flex; align-items: center; width: 48px; height: 36px; margin-top: 8px; padding-left: 9px; border-radius: 18px 0 0 18px; background: #fff; box-shadow: 0 4px 16px rgba(0,0,0,.12); }
.ring { display: flex; align-items: center; justify-content: center; width: 24px; height: 24px; border: 3px solid transparent; border-radius: 50%; background: linear-gradient(#fff, #fff) padding-box, conic-gradient(#4b52f5, #3d4af5 25%, #0fb5ea 40%, #2f7cf5 50%, #a93bea 65%, #8a3cf0 80%, #4b62f5) border-box; }

/* Taskbar */
.taskbar {
  display: flex;
  align-items: center;
  height: 48px;
  padding-bottom: 1px;
  border-top: 1px solid #b9aebb;
  background: linear-gradient(90deg, #dfdcea 0%, #e3d8e9 18%, #e6d7e6 33%, #ecd8e1 46%, #e7d7e6 60%, #ead8e3 75%, #edd8e1 88%, #e7d8e5 100%);
  color: #222;
  font-size: 11.5px;
  line-height: 16px;
}
.weather { display: flex; align-items: center; width: 457px; padding-left: 19px; }
.weather svg { margin-bottom: 5px; }
.lines { display: flex; flex-direction: column; }
.weather .lines { margin-left: 3.5px; letter-spacing: 0; }
.soft { color: #555; }
.tsearch { display: flex; align-items: center; width: 219px; height: 31px; margin-left: 12px; padding: 0 7px 0 11px; border: 1px solid #d8c8d4; border-radius: 16px; background: #f8f1f7; color: #5b565b; font-size: 13.3px; }
.tsearch span { margin-left: 8.5px; }
.bird { margin-left: auto; }
.apps { display: flex; margin-left: 7px; gap: 8px; }
.app { position: relative; display: flex; align-items: center; justify-content: center; width: 36px; height: 40px; }
.app.active { border-radius: 4px; background: #f4ecf4; box-shadow: 3px 0 0 -1px #eee2ec; }
.bar, .pip { position: absolute; bottom: 0; width: 16px; height: 3px; border-radius: 2px; background: #0f74cf; }
.pip { width: 6px; background: #85808a; }
.tray { display: flex; align-items: center; margin: 0 19px 0 auto; }
.onedrive { margin-left: 17px; }
.lang { width: 36px; margin: 0 12px 0 11px; text-align: center; }
.vol { margin: 0 8px 0 7px; }
.clock { width: 79px; text-align: right; letter-spacing: .22px; }
```
